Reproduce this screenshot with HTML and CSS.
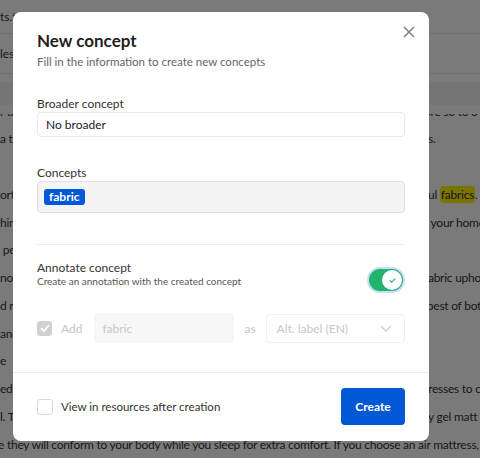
FILE: index.html
```html
<!DOCTYPE html>
<html lang="en">
<head>
<meta charset="utf-8">
<title>New concept</title>
<link rel="stylesheet" href="styles.css">
</head>
<body>
<div class="page">
  <div class="bar bar-top"><span class="crumb">ts.txt</span></div>
  <div class="bar bar-tabs"><span class="tab">les</span></div>
  <div class="gap"></div>
  <div class="band"></div>
  <div class="doc">
    <div class="doc-inner">
      <div class="ln"><span class="l">r the bed frame</span><span class="r">ore so to o</span></div>
      <div class="ln"><span class="l">a two-layer</span><span class="r">rs.</span></div>
      <div class="ln"><span class="l"></span><span class="r"></span></div>
      <div class="ln"><span class="l">ortrait of</span><span class="r">ful <span class="hl">fabrics</span>. I</span></div>
      <div class="ln"><span class="l">hinking</span><span class="r">t your home</span></div>
      <div class="ln"><span class="l">&nbsp;perfect</span><span class="r"></span></div>
      <div class="ln"><span class="l">not</span><span class="r">fabric upho</span></div>
      <div class="ln"><span class="l">d rest</span><span class="r">&nbsp;best of both</span></div>
      <div class="ln"><span class="l">and</span><span class="r"></span></div>
      <div class="ln"><span class="l">e</span><span class="r"></span></div>
      <div class="ln"><span class="l">ed</span><span class="r">tresses to c</span></div>
      <div class="ln"><span class="l">l. The</span><span class="r">ry gel matt</span></div>
      <div class="ln"><span class="l full">e they will conform to your body while you sleep for extra comfort. If you choose an air mattress,</span></div>
    </div>
  </div>
</div>

<div class="overlay"></div>

<div class="modal" role="dialog" aria-labelledby="dlg-title">
  <button class="close" aria-label="Close">
    <svg viewBox="0 0 12 12" width="12" height="12"><path d="M1 1L11 11M11 1L1 11"/></svg>
  </button>
  <div class="modal-body">
    <h2 class="title" id="dlg-title">New concept</h2>
    <p class="subtitle">Fill in the information to create new concepts</p>

    <div class="field field-broader">
      <label class="label">Broader concept</label>
      <div class="input">No broader</div>
    </div>

    <div class="field field-concepts">
      <label class="label">Concepts</label>
      <div class="tags"><span class="chip">fabric</span></div>
    </div>

    <hr class="divider">

    <div class="annotate">
      <div class="annotate-text">
        <div class="label">Annotate concept</div>
        <div class="hint">Create an annotation with the created concept</div>
      </div>
      <span class="toggle">
        <span class="knob">
          <svg viewBox="0 0 8 6" width="7" height="5"><path d="M1 3.2L3 5L7 1"/></svg>
        </span>
      </span>
    </div>

    <div class="add-row">
      <span class="cb cb-disabled">
        <svg viewBox="0 0 10 8" width="10" height="8"><path d="M1 4L4 7L9 1"/></svg>
      </span>
      <span class="add-label">Add</span>
      <div class="input-disabled">fabric</div>
      <span class="as">as</span>
      <div class="select">
        <span>Alt. label (EN)</span>
        <svg viewBox="0 0 12 7" width="12" height="7"><path d="M1 1L6 6L11 1"/></svg>
      </div>
    </div>
  </div>

  <div class="modal-footer">
    <label class="view"><span class="cb"></span><span>View in resources after creation</span></label>
    <button class="btn-primary">Create</button>
  </div>
</div>
</body>
</html>
```

FILE: styles.css
```css
html, body {
  margin: 0;
  padding: 0;
}

body {
  width: 480px;
  height: 458px;
  overflow: hidden;
  position: relative;
  background: #ffffff;
  font-family: Lato, "Noto Sans", sans-serif;
}

/* ---------- background page ---------- */
.page {
  color: #363636;
  font-size: 12px;
}

.bar {
  display: flex;
  align-items: center;
  border-bottom: 1px solid #e9e9e9;
  white-space: nowrap;
  overflow: hidden;
}

.bar-top {
  height: 33px;
}

.bar-tabs {
  height: 39px;
}

.gap {
  height: 8px;
}

.band {
  height: 23px;
  background: #f4f4f4;
}

.doc {
  margin-top: 9px;
  height: 344px;
  overflow: hidden;
}

.doc-inner {
  margin-top: -16.5px;
}

.ln {
  display: flex;
  height: 27.75px;
  line-height: 27.75px;
  font-size: 12px;
  letter-spacing: -0.25px;
  white-space: nowrap;
}

.ln .l {
  flex: 1;
  overflow: hidden;
}

.ln .l.full {
  margin-left: -2px;
}

.ln .r {
  width: 56px;
  flex: none;
  overflow: hidden;
}

.hl {
  background: #fff200;
  border-radius: 3px;
  padding: 1px 1px;
}

/* ---------- overlay ---------- */
.overlay {
  position: fixed;
  inset: 0;
  background: rgba(0, 0, 0, 0.52);
}

/* ---------- modal ---------- */
.modal {
  position: absolute;
  left: 13px;
  top: 12px;
  width: 416px;
  background: #ffffff;
  border-radius: 8px;
  color: #2b2b2b;
}

.close {
  position: absolute;
  top: 14px;
  right: 14px;
  width: 12px;
  height: 12px;
  padding: 0;
  border: 0;
  background: none;
  display: flex;
}

.close svg path {
  stroke: #7e7e7e;
  stroke-width: 1.5;
  fill: none;
}

.modal-body {
  padding: 19px 24px 29px;
}

.title {
  margin: 0;
  font-size: 17px;
  line-height: 20px;
  font-weight: 700;
  color: #1f1f1f;
}

.subtitle {
  margin: 4px 0 0;
  font-size: 11.5px;
  line-height: 14px;
  color: #666666;
}

.field-broader {
  margin-top: 27px;
}

.field-concepts {
  margin-top: 28px;
}

.label {
  display: block;
  font-size: 12px;
  line-height: 15px;
  color: #333333;
}

.input {
  margin-top: 1px;
  height: 25px;
  box-sizing: border-box;
  border: 1px solid #e7e7e7;
  border-radius: 4px;
  padding: 0 8px;
  display: flex;
  align-items: center;
  font-size: 12px;
  color: #222222;
}

.tags {
  margin-top: 1px;
  height: 32px;
  box-sizing: border-box;
  border: 1px solid #e0e0e0;
  background: #f4f4f4;
  border-radius: 4px;
  padding: 0 6px;
  display: flex;
  align-items: center;
}

.chip {
  background: #0057d9;
  color: #ffffff;
  font-weight: 700;
  font-size: 12px;
  line-height: 16px;
  height: 16px;
  padding: 0 5px;
  border-radius: 3px;
}

.divider {
  margin: 31px 0 0;
  border: 0;
  border-top: 1px solid #ececec;
  height: 0;
}

.annotate {
  margin-top: 15px;
  display: flex;
  justify-content: space-between;
  align-items: flex-start;
}

.hint {
  font-size: 10px;
  line-height: 13px;
  color: #555555;
}

.toggle {
  margin-top: 9px;
  margin-right: 2px;
  width: 34px;
  height: 22px;
  box-sizing: border-box;
  padding: 1px;
  border-radius: 11px;
  background: #24b36b;
  box-shadow: 0 0 0 2px #c6defd;
  display: flex;
  align-items: center;
  justify-content: flex-end;
}

.knob {
  width: 20px;
  height: 20px;
  border-radius: 50%;
  background: #ffffff;
  display: flex;
  align-items: center;
  justify-content: center;
}

.knob svg path {
  stroke: #24b36b;
  stroke-width: 1.3;
  fill: none;
  stroke-linecap: round;
  stroke-linejoin: round;
}

.add-row {
  margin-top: 22px;
  display: flex;
  align-items: center;
  font-size: 12px;
  color: #c6c6c6;
}

.cb {
  width: 16px;
  height: 16px;
  box-sizing: border-box;
  border: 1px solid #dadada;
  border-radius: 3px;
  background: #ffffff;
  flex: none;
}

.cb-disabled {
  width: 15px;
  height: 15px;
  background: #d0d0d0;
  border-color: #d0d0d0;
  display: flex;
  align-items: center;
  justify-content: center;
}

.cb-disabled svg path {
  stroke: #ffffff;
  stroke-width: 1.8;
  fill: none;
}

.add-label {
  margin: 0 12px 0 9px;
}

.input-disabled {
  width: 140px;
  height: 30px;
  box-sizing: border-box;
  background: #f7f7f7;
  border-radius: 4px;
  padding: 0 8px;
  display: flex;
  align-items: center;
  color: #c9c9c9;
}

.as {
  margin: 0 10px;
}

.select {
  flex: 1;
  height: 29px;
  box-sizing: border-box;
  border: 1px solid #f0f0f0;
  border-radius: 4px;
  padding: 0 12px 0 10px;
  display: flex;
  align-items: center;
  justify-content: space-between;
}

.select svg path {
  stroke: #cccccc;
  stroke-width: 1.4;
  fill: none;
}

.modal-footer {
  border-top: 1px solid #ececec;
  padding: 15px 24px 16px;
  display: flex;
  align-items: center;
  justify-content: space-between;
}

.view {
  display: flex;
  align-items: center;
  gap: 8px;
  font-size: 11.5px;
  color: #333333;
}

.btn-primary {
  width: 64px;
  height: 37px;
  border: 0;
  border-radius: 4px;
  background: #0058d6;
  color: #ffffff;
  font-family: Lato, "Noto Sans", sans-serif;
  font-weight: 700;
  font-size: 12px;
}
```
